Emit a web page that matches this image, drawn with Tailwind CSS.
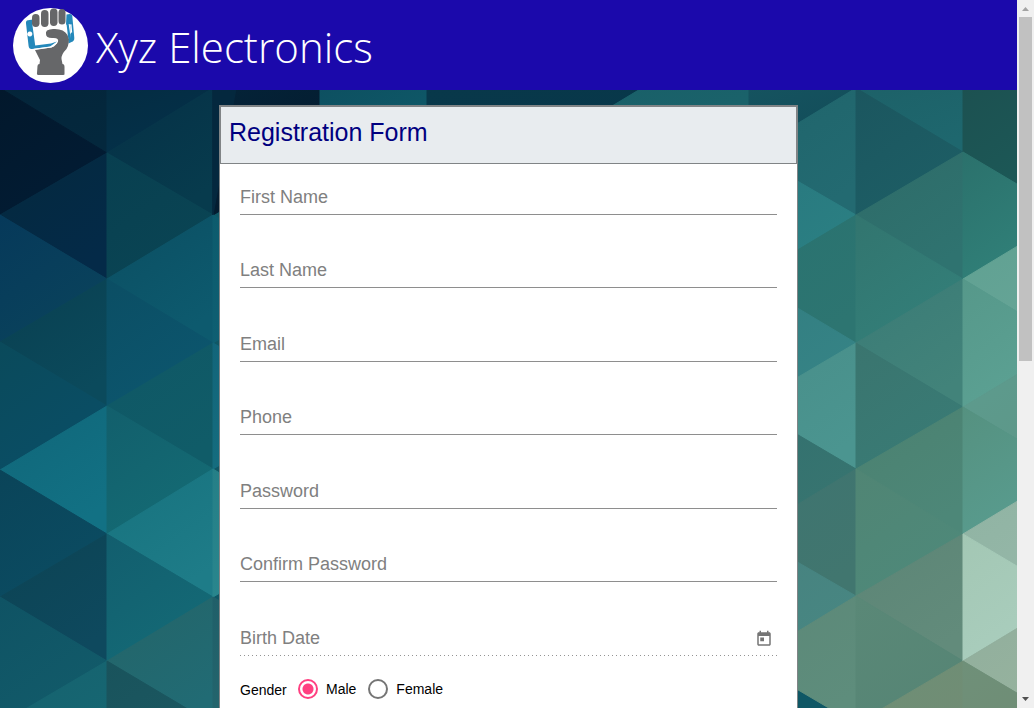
<!DOCTYPE html>
<html lang="en">
<head>
<meta charset="utf-8">
<meta name="viewport" content="width=device-width, initial-scale=1">
<title>Xyz Electronics - Registration</title>
<script src="https://cdn.jsdelivr.net/npm/@tailwindcss/browser@4"></script>
</head>
<body class="flex h-screen overflow-hidden font-['Liberation_Sans',Arial,sans-serif] text-black">
<div class="relative isolate flex min-w-0 flex-1 flex-col overflow-hidden bg-[#0f5765]">
  <!-- Triangle mosaic behind the page -->
  <svg id="mosaic" class="absolute inset-0 -z-10 size-full" viewBox="0 0 1017 708" preserveAspectRatio="xMidYMin slice" aria-hidden="true"></svg>

  <header class="flex h-[90px] shrink-0 items-center gap-2 bg-[#1b09ab] pl-[13px]">
    <svg class="size-[75px] shrink-0" viewBox="13 8 75 75" aria-hidden="true">
      <circle cx="50.500" cy="45.500" r="37.500" fill="#fff"/>
      <path fill="#2488ba" fill-rule="evenodd" d="M33 19.500 L28 20.200 Q25.600 20.600 26 23.500 L28.600 46 Q29 49.300 32 48.900 L50 46.500 L57 41.500 L51 43.500 L35.200 45.500 L32.400 25 Z M29.800 31.500 a2.500 2.500 0 1 0 .1 0 Z"/>
      <path fill="#2488ba" fill-rule="evenodd" d="M66.500 14.500 L70 14 Q72 14 72.300 16 L74.300 38 Q74.500 41 71.500 42 L68.500 43.500 Q68.500 41 68 39 L71 38.500 L69.800 25 L66 24.500 Z M70 24.500 L71.500 24.300 L72.200 32.500 L70.800 32.700 Z"/>
      <path fill="#2488ba" d="M66.500 24 L69.300 23 L71.200 39.500 L68.500 40.500 Z"/>
      <path fill="none" stroke="#fff" stroke-width="1" d="M69.200 24 L70.500 33.500"/>
      <g fill="#666769">
        <rect x="32" y="14" width="7.500" height="13" rx="3.700"/>
        <rect x="41" y="10" width="7.500" height="17" rx="3.700"/>
        <rect x="50" y="8.500" width="7.500" height="17.500" rx="3.700"/>
        <rect x="58.500" y="9" width="7" height="15.500" rx="3.500"/>
        <path d="M47 30.500 Q50 28.500 55 29 Q64 29 67.500 35 Q70.500 42 66.500 49 Q61 54.500 61.500 59 L62.500 64 Q64.500 64 64.500 67 L64.500 73.500 Q65 75 63 75 L39 75 Q36.500 75 37 73 L37.500 66 Q37.500 64 39.500 64 L40 60 Q37 54 35 50 L51 47.500 Q54 47 55.500 45 Q59.500 41.500 57.500 39 Q56 37.500 52 38 Q46 38 46 34 Q45.500 32 47 30.500 Z"/>
      </g>
      <path d="M34 49.300 L51.500 47 L57 43" fill="none" stroke="#fff" stroke-width="1"/>
    </svg>
    <span class="pt-1 font-['Open_Sans',sans-serif] text-[42px] leading-[60px] font-light whitespace-nowrap text-white">Xyz Electronics</span>
  </header>

  <main class="px-4 pt-[15px]">
    <form class="mx-auto w-full max-w-[579px] border border-[#808486] bg-white">
      <h1 class="h-[58px] border border-[#808486] bg-[#e8ecef] pl-2 pt-2 text-[25px] leading-[34px] text-[#000080]">Registration Form</h1>
      <div class="px-5">
        <div class="flex h-[51px] items-end border-b border-[#8e8e8e]"><input type="text" aria-label="First Name" placeholder="First Name" class="h-[34px] w-full text-lg outline-none placeholder:text-[#808080]"></div>
        <div class="flex h-[73px] items-end border-b border-[#8e8e8e]"><input type="text" aria-label="Last Name" placeholder="Last Name" class="h-[34px] w-full text-lg outline-none placeholder:text-[#808080]"></div>
        <div class="flex h-[74px] items-end border-b border-[#8e8e8e]"><input type="email" aria-label="Email" placeholder="Email" class="h-[34px] w-full text-lg outline-none placeholder:text-[#808080]"></div>
        <div class="flex h-[73px] items-end border-b border-[#8e8e8e]"><input type="tel" aria-label="Phone" placeholder="Phone" class="h-[34px] w-full text-lg outline-none placeholder:text-[#808080]"></div>
        <div class="flex h-[74px] items-end border-b border-[#8e8e8e]"><input type="password" aria-label="Password" placeholder="Password" class="h-[34px] w-full text-lg outline-none placeholder:text-[#808080]"></div>
        <div class="flex h-[73px] items-end border-b border-[#8e8e8e]"><input type="password" aria-label="Confirm Password" placeholder="Confirm Password" class="h-[34px] w-full text-lg outline-none placeholder:text-[#808080]"></div>
        <div class="flex h-[73px] items-end">
          <input type="text" aria-label="Birth Date" placeholder="Birth Date" class="h-[34px] min-w-0 flex-1 text-lg outline-none placeholder:text-[#808080]">
          <button type="button" aria-label="Open calendar" class="mr-px mb-1 flex size-6 items-center justify-center text-[#757575]">
            <svg class="size-[18px]" viewBox="0 0 24 24" fill="currentColor"><path d="M19 3h-1V1h-2v2H8V1H6v2H5c-1.110 0-1.990.9-1.990 2L3 19c0 1.100.89 2 2 2h14c1.100 0 2-.9 2-2V5c0-1.100-.9-2-2-2zm0 16H5V8h14v11zM7 10h5v5H7z"/></svg>
          </button>
        </div>
        <div class="h-px w-full bg-[repeating-linear-gradient(to_right,#949494_0_1px,transparent_1px_4px)]"></div>
        <div role="radiogroup" aria-labelledby="gender-label" class="flex pt-[23px] pb-6 text-sm leading-5">
          <span id="gender-label" class="w-[58px] pt-px">Gender</span>
          <label class="flex items-start gap-2"><input type="radio" name="gender" value="male" checked class="size-5 appearance-none rounded-full border-2 border-[#757575] checked:border-[#ff4081] checked:bg-[radial-gradient(circle,#ff4081_5px,transparent_6px)]">Male</label>
          <label class="ml-3 flex items-start gap-2"><input type="radio" name="gender" value="female" class="size-5 appearance-none rounded-full border-2 border-[#757575] checked:border-[#ff4081] checked:bg-[radial-gradient(circle,#ff4081_5px,transparent_6px)]">Female</label>
        </div>
      </div>
    </form>
  </main>
</div>

<!-- Scroll bar -->
<div class="flex w-[17px] shrink-0 flex-col items-center bg-[#f0f0f0]" aria-hidden="true">
  <svg class="h-[17px] w-full shrink-0" viewBox="0 0 17 17"><path fill="#a3a3a3" d="M5 11L8.500 7L12 11Z"/></svg>
  <div class="min-h-0 flex-1 self-stretch px-0.5"><div class="h-[51%] bg-[#c1c1c1]"></div></div>
  <svg class="h-[17px] w-full shrink-0" viewBox="0 0 17 17"><path fill="#505050" d="M5 6L8.500 10L12 6Z"/></svg>
</div>

<script>
const shapes = [
  ["0,88 107,88 107,153", "#04253a", "#04283d"], ["0,88 107,153 0,215", "#02182c", "#021c34"],
  ["107,153 107,279 0,215", "#04293e", "#042a48"], ["0,215 107,279 0,342", "#06395a", "#0a435c"],
  ["107,279 107,406 0,342", "#093f50", "#0b4a5c"], ["0,342 107,406 0,470", "#0a4a5b", "#0a4e66"],
  ["107,406 107,534 0,470", "#106679", "#127184"], ["0,470 107,534 0,597", "#0a4459", "#0b4c62"],
  ["107,534 107,661 0,597", "#0c4353", "#0e495e"], ["0,597 107,661 0,724", "#0f5364", "#125b6a"],
  ["107,661 107,788 0,724", "#15616e", "#176873"],
  ["107,88 213,88 107,153", "#042c42", "#04314a"], ["213,88 213,215 107,153", "#053046", "#073b4d"],
  ["107,153 213,215 107,279", "#083f50", "#0a4554"], ["213,215 213,343 107,279", "#0b4e62", "#0d5a6e"],
  ["107,279 213,343 107,406", "#0b4e64", "#0c566e"], ["213,343 213,469 107,406", "#0f5765", "#105c68"],
  ["107,406 213,469 107,534", "#125f6c", "#146b74"], ["213,469 213,597 107,534", "#17727e", "#1e7c88"],
  ["107,534 213,597 107,661", "#125e6e", "#146a76"], ["213,597 213,724 107,661", "#246468", "#216b74"],
  ["107,661 213,724 107,788", "#19535c", "#1c5962"],
  ["213,88 320,88 320,153 213,215", "#042338", "#031a2d"], ["213,88 236,88 213,215", "#04283e", "#04283e"],
  ["320,88 427,88 427,215 320,153", "#0d5061", "#0f5d6b"], ["427,88 642,88 534,153 427,153", "#08384a", "#07374a"],
  ["642,88 749,88 749,215 534,153", "#195f68", "#1b656c"],
  ["213,215 320,279 213,343", "#0d5b6d", "#0f6074"], ["213,343 320,406 213,469", "#12657a", "#166f80"],
  ["213,469 320,534 213,597", "#257f87", "#2a888f"], ["213,597 320,661 213,724", "#205f69", "#24676e"],
  ["749,88 856,88 749,153", "#15535f", "#124c59"], ["856,88 856,215 749,153", "#1f646b", "#236a71"],
  ["749,153 856,215 749,279", "#28777e", "#2b8083"], ["856,215 856,343 749,279", "#297270", "#2d7571"],
  ["749,279 856,343 749,406", "#327d80", "#368486"], ["856,343 856,469 749,406", "#488e89", "#4b9590"],
  ["749,406 856,469 749,534", "#32706f", "#387570"], ["856,469 856,596 749,534", "#3e7470", "#41766f"],
  ["749,534 856,596 749,661", "#46817f", "#488782"], ["856,596 856,724 749,661", "#5c8878", "#5e8d7c"],
  ["856,88 963,88 963,152", "#1d6168", "#1e676e"], ["856,88 963,152 856,215", "#1b565f", "#1d5e65"],
  ["963,152 963,279 856,215", "#2e6b68", "#2f7370"], ["856,215 963,279 856,343", "#32756f", "#337f79"],
  ["963,279 963,407 856,343", "#3a7b76", "#42837a"], ["856,343 963,407 856,469", "#3a756f", "#397b75"],
  ["963,407 963,534 856,469", "#4b8170", "#4d8778"], ["856,469 963,534 856,596", "#508574", "#4e897a"],
  ["963,534 963,661 856,596", "#5c8576", "#628b7b"], ["856,596 963,661 856,724", "#5a8877", "#568575"],
  ["963,661 963,788 856,724", "#6d8f76", "#728c74"],
  ["963,88 1069,88 1069,215 963,152", "#1c5151", "#1c5a58"], ["963,152 1069,215 963,279", "#2b716c", "#31827a"],
  ["1069,215 1069,343 963,279", "#5fa091", "#66a597"], ["963,279 1069,343 963,407", "#56988a", "#5ca294"],
  ["1069,343 1069,470 963,407", "#5d9c8f", "#5d9788"], ["963,407 1069,470 963,534", "#559180", "#599d90"],
  ["1069,470 1069,597 963,534", "#8fb3a2", "#95b7a8"], ["963,534 1069,597 963,661", "#a3c7b4", "#aacebe"],
  ["1069,597 1069,724 963,661", "#90ae9d", "#97b39e"], ["963,661 1069,724 963,788", "#6f9079", "#6f8b73"]
];
document.getElementById("mosaic").innerHTML = shapes.map(([points, from, to], i) =>
  `<linearGradient id="g${i}" x1="0" y1="0" x2="0.6" y2="1"><stop stop-color="${from}"/><stop offset="1" stop-color="${to}"/></linearGradient>` +
  `<polygon points="${points}" fill="url(#g${i})" stroke="url(#g${i})" stroke-width="1"/>`).join("");
</script>
</body>
</html>
